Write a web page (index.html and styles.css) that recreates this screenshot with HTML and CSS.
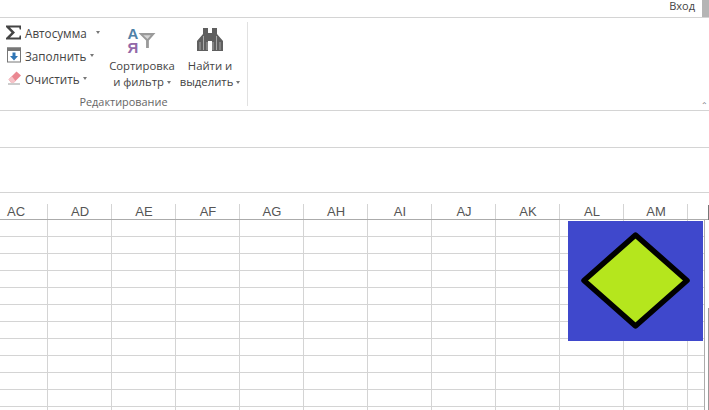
FILE: index.html
```html
<!DOCTYPE html>
<html>
  <head>
    <title>Редактирование</title>
    <link rel="stylesheet" href="styles.css">
  </head>
  <body>
    <div class="topbar">
      <span class="login">Вход</span>
      <span class="avatar"></span>
    </div>

    <div class="ribbon">
      <div class="group">
        <div class="group-body">
          <div class="small-buttons">
            <div class="small-button">
              <svg class="small-icon" viewBox="0 0 20 20"><path d="M1 2.500H16V6.500H14.700L14.200 4.500H5L10 9.500L5 14.500H14.200L14.700 12.500H16V16.500H1V15L6.500 9.500L1 4Z" fill="#444"/></svg>
              <span>Автосумма</span>
              <span class="arrow arrow-far"></span>
            </div>
            <div class="small-button">
              <svg class="small-icon" viewBox="0 0 20 20">
                <rect x="2.500" y="2" width="13" height="14" fill="#fff" stroke="#777"/>
                <rect x="2" y="1.500" width="14" height="3.500" fill="#777"/>
                <path d="M7.500 6.500H10.500V10H13L9 14.500L5 10H7.500Z" fill="#2f75b5"/>
              </svg>
              <span>Заполнить</span>
              <span class="arrow"></span>
            </div>
            <div class="small-button">
              <svg class="small-icon" viewBox="0 0 20 20">
                <path d="M3.500 10.500L11.500 2.500L16 6.500L9 13.500H6Z" fill="#ea8791"/>
                <path d="M3.500 10.500L6 13.500H9L10.500 12L7 7.500Z" fill="#f6c3c8"/>
                <path d="M3 15H15" stroke="#999" stroke-width="1"/>
              </svg>
              <span>Очистить</span>
              <span class="arrow"></span>
            </div>
          </div>

          <div class="big-button sort-button">
            <div class="big-icon">
              <span class="letters"><span class="letter-a">А</span><span class="letter-ya">Я</span></span>
              <svg class="funnel" viewBox="0 0 18 16"><path d="M0 0H18L11 8V16H8V8Z" fill="#9a9a9a"/><path d="M5 2.500H13L9.500 6.500Z" fill="#d5d5d5"/></svg>
            </div>
            <div class="big-label">Сортировка<br>и фильтр<span class="arrow"></span></div>
          </div>

          <div class="big-button find-button">
            <div class="big-icon">
              <svg class="binoculars" viewBox="0 0 26 23">
                <path d="M6 0H11V5H15V0H20V6L26 13V23H15V13H11V23H0V13L6 6Z" fill="#5f5f5f"/>
                <path d="M3 14V22M6.500 8V22M10 14V22M16 14V22M19.500 8V22M23 14V22" stroke="#a8a8a8" stroke-width="1"/>
              </svg>
            </div>
            <div class="big-label">Найти и<br>выделить<span class="arrow"></span></div>
          </div>
        </div>
        <div class="group-name">Редактирование</div>
      </div>
      <div class="collapse">⌃</div>
    </div>

    <div class="formula-gap"></div>
    <div class="formula-bar"></div>

    <div class="sheet">
      <div class="col-heads">
        <div class="head head-first">AC</div>
        <div class="head">AD</div>
        <div class="head">AE</div>
        <div class="head">AF</div>
        <div class="head">AG</div>
        <div class="head">AH</div>
        <div class="head">AI</div>
        <div class="head">AJ</div>
        <div class="head">AK</div>
        <div class="head">AL</div>
        <div class="head">AM</div>
        <div class="head head-last"></div>
      </div>
      <div class="cells"></div>

      <div class="picture">
        <svg viewBox="0 0 135 120" width="135" height="120">
          <polygon points="67.500,14 119,59.500 67.500,105 16,59.500" fill="#b5e61d" stroke="#000" stroke-width="5.500" stroke-linejoin="round"/>
        </svg>
      </div>

      <div class="scroll-top"></div>
      <div class="scroll-bottom"></div>
    </div>
  </body>
</html>
```

FILE: styles.css
```css
*{
  box-sizing: border-box;
}
body{
  margin: 0;
  width: 709px;
  height: 410px;
  overflow: hidden;
  background-color: white;
  color: #444;
  font-family: "Open Sans", "Noto Sans", sans-serif;
  font-size: 11.300px;
}

.topbar{
  height: 18px;
  display: flex;
  justify-content: flex-end;
  align-items: flex-start;
  border-bottom: 1px solid #d4d4d4;
}
.login{
  margin-right: 7px;
  font-size: 11px;
  line-height: 11px;
}
.avatar{
  width: 7px;
  height: 17px;
  background-color: #b5b5b5;
}

.ribbon{
  height: 93px;
  display: flex;
  justify-content: space-between;
  border-bottom: 1px solid #d4d4d4;
}
.group{
  width: 248px;
  height: 84px;
  margin-top: 4px;
  border-right: 1px solid #e1e1e1;
}
.group-body{
  height: 73px;
  display: flex;
}
.group-name{
  text-align: center;
  font-size: 10.900px;
  line-height: 14px;
  color: #666;
}
.collapse{
  align-self: flex-end;
  margin-right: 1px;
  font-size: 8px;
  line-height: 10px;
  color: #777;
}

.small-buttons{
  width: 107px;
  padding-left: 5px;
  padding-top: 1px;
  display: flex;
  flex-direction: column;
  gap: 4px;
  font-size: 11.700px;
}
.small-button{
  height: 19px;
  display: flex;
  align-items: center;
  white-space: nowrap;
}
.small-icon{
  width: 20px;
  height: 20px;
  flex: none;
}
.arrow{
  display: inline-block;
  width: 0;
  height: 0;
  margin-left: 3px;
  vertical-align: middle;
  border-top: 3px solid #777;
  border-left: 2.500px solid transparent;
  border-right: 2.500px solid transparent;
}
.arrow-far{
  margin-left: 9px;
}

.big-button{
  text-align: center;
}
.sort-button{
  width: 70px;
}
.find-button{
  width: 66px;
}
.big-icon{
  height: 36px;
  display: flex;
  justify-content: center;
  align-items: flex-start;
}
.big-label{
  line-height: 16px;
  white-space: nowrap;
}
.letters{
  display: flex;
  flex-direction: column;
  margin-top: 5px;
  font-family: "Liberation Sans", sans-serif;
  font-size: 15px;
  font-weight: bold;
  line-height: 14px;
}
.letter-a{
  color: #4f81a8;
}
.letter-ya{
  color: #9368a8;
}
.funnel{
  width: 18px;
  height: 15px;
  margin-top: 11px;
}
.binoculars{
  width: 26px;
  height: 23px;
  margin-top: 6px;
}

.formula-gap{
  height: 37px;
  border-bottom: 1px solid #d4d4d4;
}
.formula-bar{
  height: 45px;
  border-bottom: 1px solid #d4d4d4;
}

.sheet{
  position: relative;
  height: 217px;
}
.col-heads{
  height: 27px;
  display: flex;
  border-bottom: 1px solid #ababab;
}
.head{
  width: 64px;
  padding-top: 11px;
  flex: none;
  text-align: center;
  font-family: "Liberation Sans", sans-serif;
  font-size: 13px;
  line-height: 15px;
  color: #555;
  background: linear-gradient(#d4d4d4, #d4d4d4) right 11px / 1px 16px no-repeat;
}
.head-first{
  width: 48px;
  padding-right: 16px;
}
.head-last{
  width: 17px;
  background: none;
}
.cells{
  width: 705px;
  height: 190px;
  border-right: 1px solid #ababab;
  background-image:
    linear-gradient(to right, #d4d4d4 1px, transparent 1px),
    linear-gradient(to bottom, transparent 16px, #d4d4d4 16px);
  background-size: 64px 17px;
  background-position: 47px 0, 0 0;
}

.picture{
  position: absolute;
  left: 568px;
  top: 28px;
  width: 135px;
  height: 120px;
  background-color: #3f48cc;
}
.picture svg{
  display: block;
}

.scroll-top{
  position: absolute;
  right: 0;
  top: 12px;
  width: 1px;
  height: 15px;
  background-color: #777;
}
.scroll-bottom{
  position: absolute;
  right: 0;
  top: 115px;
  width: 1px;
  height: 102px;
  background-color: #999;
}
```
